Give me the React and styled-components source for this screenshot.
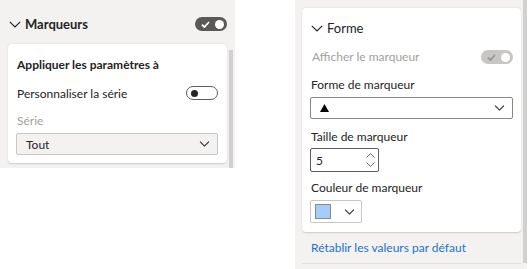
import React from "react";
import styled, { createGlobalStyle } from "styled-components";

const Global = createGlobalStyle`
  html, body { margin: 0; padding: 0; background: #ffffff; }
  body { font-family: Lato, "Noto Sans", sans-serif; color: #252423; }
  * { box-sizing: border-box; }
`;

const Page = styled.div`
  display: flex;
  align-items: flex-start;
  width: 529px;
  height: 269px;
`;

const Pane = styled.div`
  display: flex;
  background: #f3f2f1;
  width: ${(p) => p.$w}px;
  height: ${(p) => p.$h}px;
  margin-left: ${(p) => p.$ml || 0}px;
`;

const Column = styled.div`
  display: flex;
  flex-direction: column;
  width: 228px;
  padding: ${(p) => p.$pad};
`;

const Scroll = styled.div`
  width: 4px;
  margin-top: ${(p) => p.$mt || 0}px;
  height: ${(p) => p.$h}px;
  background: #d2d0ce;
  margin-left: ${(p) => p.$ml || 0}px;
`;

const Header = styled.div`
  display: flex;
  align-items: center;
  height: 40px;
  margin-top: 4px;
  padding-left: 1px;
  padding-right: 1px;
`;

const Chevron = styled.svg`
  flex: none;
  margin-right: ${(p) => p.$mr || 0}px;
`;

const HeaderTitle = styled.span`
  font-size: 13px;
  font-weight: ${(p) => (p.$bold ? 700 : 400)};
  line-height: 16px;
  flex: 1;
`;

const Card = styled.div`
  background: #ffffff;
  border-radius: 4px;
  box-shadow: 0 0.5px 1.5px rgba(0, 0, 0, 0.16);
  display: flex;
  flex-direction: column;
  width: 219px;
  height: ${(p) => p.$h}px;
  padding: ${(p) => p.$pad};
`;

const Title = styled.div`
  font-size: 12px;
  font-weight: 700;
  line-height: 16px;
  padding-left: 1px;
`;

const Row = styled.div`
  display: flex;
  align-items: center;
  justify-content: space-between;
  height: ${(p) => p.$h || 20}px;
  margin-top: ${(p) => p.$mt || 0}px;
  padding-left: 1px;
`;

const Label = styled.div`
  font-size: 12px;
  line-height: 16px;
  color: ${(p) => (p.$muted ? "#a19f9d" : "#252423")};
  margin-top: ${(p) => p.$mt || 0}px;
  padding-left: 1px;
`;

const Toggle = styled.div`
  position: relative;
  width: 32px;
  height: 14px;
  border-radius: 8px;
  flex: none;
  background: ${(p) => (p.$on ? (p.$disabled ? "#c8c6c4" : "#5b5957") : "#ffffff")};
  border: ${(p) => (p.$on ? "none" : "1px solid #605e5c")};
  display: flex;
  align-items: center;
  justify-content: ${(p) => (p.$on ? "space-between" : "flex-start")};
  padding: ${(p) => (p.$on ? "0 3px 0 6px" : "0 0 0 4px")};
`;

const Knob = styled.div`
  width: ${(p) => p.$size}px;
  height: ${(p) => p.$size}px;
  border-radius: 50%;
  background: ${(p) => p.$color};
`;

const Select = styled.div`
  display: flex;
  align-items: center;
  justify-content: space-between;
  height: 22px;
  margin-top: 4px;
  border: 1px solid ${(p) => p.$border};
  background: ${(p) => p.$bg};
  border-radius: 2px;
  padding: 0 7px 0 9px;
  font-size: 12px;
`;

const Spin = styled.div`
  display: flex;
  align-items: center;
  justify-content: space-between;
  width: 69px;
  height: 24px;
  margin-top: 3px;
  border: 1px solid #605e5c;
  border-radius: 2px;
  padding: 0 3px 0 5px;
  font-size: 12px;
`;

const Arrows = styled.div`
  display: flex;
  flex-direction: column;
  gap: 4px;
`;

const ColorBox = styled.div`
  display: flex;
  align-items: center;
  width: 52px;
  height: 23px;
  margin-top: 4px;
  border: 1px solid #c8c6c4;
  border-radius: 2px;
  padding: 0 6px 0 4px;
  gap: 13px;
`;

const Swatch = styled.div`
  width: 16px;
  height: 15px;
  background: #a6cdf9;
  border: 1px solid #8a8886;
`;

const Link = styled.div`
  font-size: 12px;
  line-height: 16px;
  color: #2273cc;
  margin-top: 8px;
  padding-left: 9px;
`;

const Divider = styled.div`
  height: 1px;
  background: #e1dfdd;
  margin-top: 7px;
`;

const Down = ({ w = 12, h = 7, mr, color = "#252423" }) => (
  <Chevron width={w} height={h} viewBox="0 0 12 7" $mr={mr}>
    <path d="M0.8 0.8 L6 6 L11.2 0.8" fill="none" stroke={color} strokeWidth="1.2" />
  </Chevron>
);

const Check = ({ color }) => (
  <svg width="9" height="7" viewBox="0 0 9 7">
    <path d="M1 3.6 L3.4 6 L8 1" fill="none" stroke={color} strokeWidth="1.8" />
  </svg>
);

export default function App() {
  return (
    <Page>
      <Global />
      <Pane $w={235} $h={168}>
        <Column $pad="0 0 0 8px">
          <Header>
            <Down mr={4} />
            <HeaderTitle $bold>Marqueurs</HeaderTitle>
            <Toggle $on>
              <Check color="#ffffff" />
              <Knob $size={9} $color="#ffffff" />
            </Toggle>
          </Header>
          <Card $h={119} $pad="13px 9px 8px 8px">
            <Title>Appliquer les paramètres à</Title>
            <Row $mt={10}>
              <span style={{ fontSize: 12 }}>Personnaliser la série</span>
              <Toggle>
                <Knob $size={7} $color="#252423" />
              </Toggle>
            </Row>
            <Label $muted $mt={10}>Série</Label>
            <Select $border="#c8c6c4" $bg="#f3f2f1">
              <span>Tout</span>
              <Down w={11} h={6} />
            </Select>
          </Card>
        </Column>
        <Scroll $mt={50} $h={118} $ml={1} />
      </Pane>

      <Pane $w={232} $h={269} $ml={60}>
        <Column $pad="8px 2px 0 7px">
          <Card $h={224} $pad="12px 8px 9px 8px">
            <Row $h={16}>
              <span style={{ display: "flex", alignItems: "center" }}>
                <Down mr={4} />
                <HeaderTitle>Forme</HeaderTitle>
              </span>
            </Row>
            <Row $h={16} $mt={13}>
              <Label $muted>Afficher le marqueur</Label>
              <Toggle $on $disabled>
                <Check color="#979593" />
                <Knob $size={9} $color="#ffffff" />
              </Toggle>
            </Row>
            <Label $mt={12}>Forme de marqueur</Label>
            <Select $border="#8a8886" $bg="#ffffff">
              <svg width="9" height="8" viewBox="0 0 9 8">
                <path d="M4.5 0 L9 8 L0 8 Z" fill="#000" />
              </svg>
              <Down w={11} h={6} />
            </Select>
            <Label $mt={10}>Taille de marqueur</Label>
            <Spin>
              <span>5</span>
              <Arrows>
                <svg width="9" height="5" viewBox="0 0 9 5">
                  <path d="M0.5 4.5 L4.5 0.7 L8.5 4.5" fill="none" stroke="#605e5c" strokeWidth="1" />
                </svg>
                <svg width="9" height="5" viewBox="0 0 9 5">
                  <path d="M0.5 0.5 L4.5 4.3 L8.5 0.5" fill="none" stroke="#605e5c" strokeWidth="1" />
                </svg>
              </Arrows>
            </Spin>
            <Label $mt={8}>Couleur de marqueur</Label>
            <ColorBox>
              <Swatch />
              <Down w={11} h={6} />
            </ColorBox>
          </Card>
          <Link>Rétablir les valeurs par défaut</Link>
          <Divider />
        </Column>
        <Scroll $h={263} />
      </Pane>
    </Page>
  );
}
